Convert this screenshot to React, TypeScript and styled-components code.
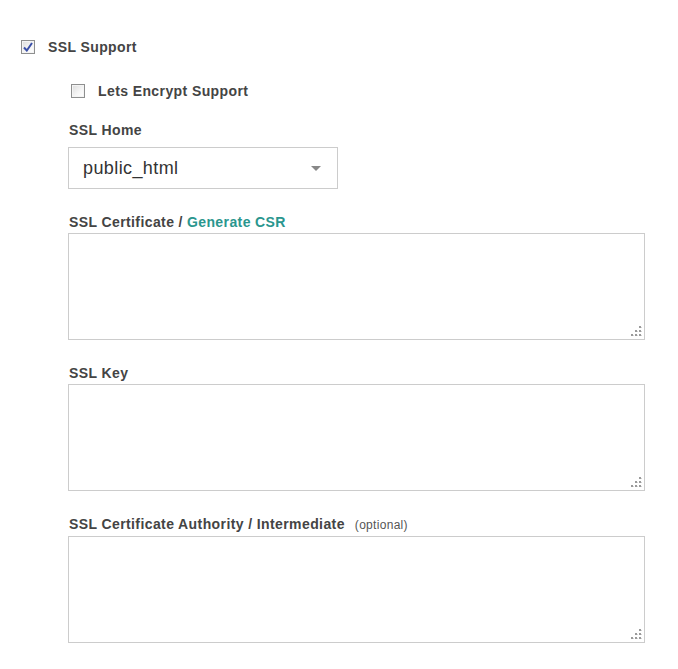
import React from "react";
import styled, { createGlobalStyle } from "styled-components";

const Global = createGlobalStyle`
  html, body { margin: 0; padding: 0; background: #fff; }
  body { font-family: "Liberation Sans", Arial, sans-serif; color: #444; }
`;

const Page = styled.div`
  padding: 38px 0 0 21px;
`;

const CheckRow = styled.label<{ $indent?: number; $top?: number }>`
  display: flex;
  align-items: center;
  gap: 13px;
  margin-left: ${(p) => p.$indent ?? 0}px;
  margin-top: ${(p) => p.$top ?? 0}px;
  font-size: 14px;
  letter-spacing: 0.4px;
  font-weight: bold;
  color: #444;
  height: 18px;
`;

const Box = styled.span<{ $checked?: boolean }>`
  box-sizing: border-box;
  width: 14px;
  height: 14px;
  border: 1px solid #8e8f8f;
  background: linear-gradient(135deg, #dcdcdc 0%, #f6f6f6 60%, #ffffff 100%);
  box-shadow: inset 0 0 0 1px #f4f4f4;
  display: flex;
  align-items: center;
  justify-content: center;
`;

const Section = styled.div`
  margin-left: 47px;
  display: flex;
  flex-direction: column;
`;

const Label = styled.div<{ $top: number }>`
  margin-top: ${(p) => p.$top}px;
  padding-left: 1px;
  font-size: 14px;
  letter-spacing: 0.4px;
  font-weight: bold;
  color: #444;
  line-height: 16px;
  display: flex;
  align-items: baseline;
`;

const Link = styled.span`
  color: #2a968e;
  margin-left: 4px;
`;

const Optional = styled.span`
  font-size: 12px;
  letter-spacing: 0.3px;
  font-weight: normal;
  color: #555;
  margin-left: 10px;
`;

const Select = styled.div`
  box-sizing: border-box;
  margin-top: 9px;
  width: 270px;
  height: 42px;
  border: 1px solid #ccc;
  display: flex;
  align-items: center;
  justify-content: space-between;
  padding: 0 16px 0 14px;
  font-size: 18px;
  letter-spacing: 0.4px;
  color: #333;
`;

const Caret = styled.span`
  width: 0;
  height: 0;
  border-left: 5px solid transparent;
  border-right: 5px solid transparent;
  border-top: 5px solid #888;
`;

const Area = styled.div`
  position: relative;
  box-sizing: border-box;
  margin-top: 3px;
  width: 577px;
  height: 107px;
  border: 1px solid #ccc;
`;

const Grip = styled.svg`
  position: absolute;
  right: 2px;
  bottom: 2px;
`;

const ResizeGrip = () => (
  <Grip width="11" height="11" viewBox="0 0 11 11">
    <g fill="#9a9a9a">
      <rect x="8" y="0" width="2" height="2" />
      <rect x="4" y="4" width="2" height="2" />
      <rect x="8" y="4" width="2" height="2" />
      <rect x="0" y="8" width="2" height="2" />
      <rect x="4" y="8" width="2" height="2" />
      <rect x="8" y="8" width="2" height="2" />
    </g>
    <g fill="#d6d6d6">
      <rect x="10" y="1" width="1" height="1" />
      <rect x="6" y="5" width="1" height="1" />
      <rect x="10" y="5" width="1" height="1" />
      <rect x="2" y="9" width="1" height="1" />
      <rect x="6" y="9" width="1" height="1" />
      <rect x="10" y="9" width="1" height="1" />
    </g>
  </Grip>
);

const Check = () => (
  <svg width="10" height="10" viewBox="0 0 10 10">
    <path d="M1 5.5 L3.8 8.5 L9 1" fill="none" stroke="#3a4fa8" strokeWidth="2" />
  </svg>
);

export default function App() {
  return (
    <>
      <Global />
      <Page>
        <CheckRow>
          <Box $checked>
            <Check />
          </Box>
          SSL Support
        </CheckRow>
        <Section>
          <CheckRow $indent={3} $top={26}>
            <Box />
            Lets Encrypt Support
          </CheckRow>
          <Label $top={22}>SSL Home</Label>
          <Select>
            public_html
            <Caret />
          </Select>
          <Label $top={25}>
            SSL Certificate /<Link>Generate CSR</Link>
          </Label>
          <Area>
            <ResizeGrip />
          </Area>
          <Label $top={25}>SSL Key</Label>
          <Area>
            <ResizeGrip />
          </Area>
          <Label $top={25}>
            SSL Certificate Authority / Intermediate
            <Optional>(optional)</Optional>
          </Label>
          <Area>
            <ResizeGrip />
          </Area>
        </Section>
      </Page>
    </>
  );
}
